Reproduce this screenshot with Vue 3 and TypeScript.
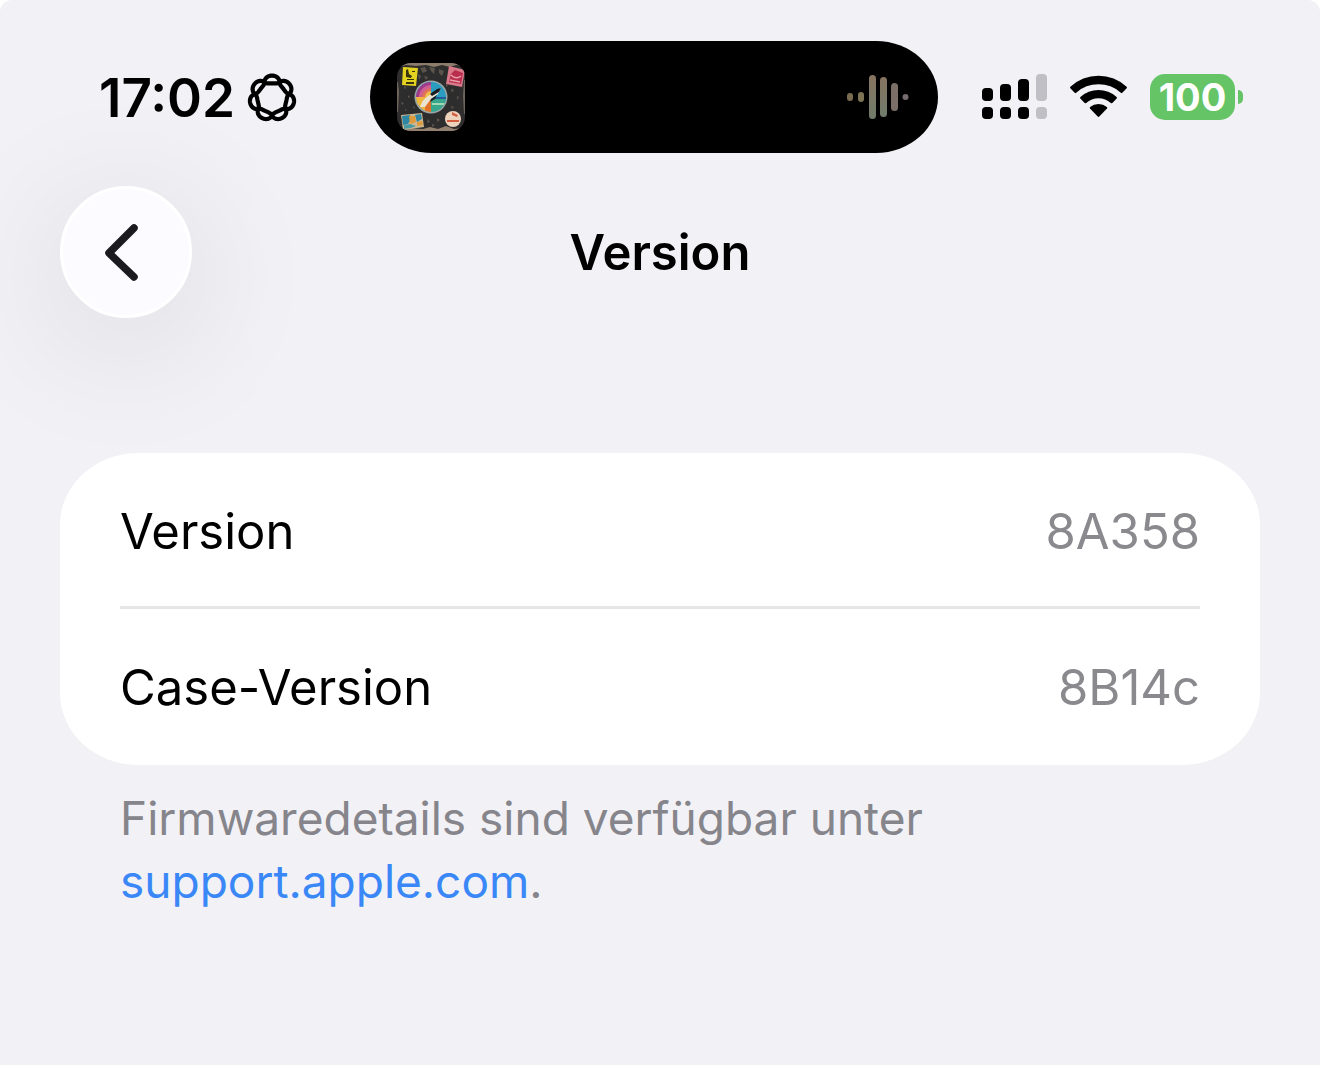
<script setup lang="ts">
interface Entry {
  label: string
  value: string
}

const entries: Entry[] = [
  { label: 'Version', value: '8A358' },
  { label: 'Case-Version', value: '8B14c' },
]

// Seven-lobed knot: one closed line that runs round the centre twice.
function knotPath(): string {
  const points: string[] = []
  const steps = 420
  for (let i = 0; i < steps; i++) {
    const t = (i / steps) * Math.PI * 4
    const a = t + 0.07 * Math.sin(7 * t)
    const r = 18 + 3.9 * Math.cos(3.5 * t) + 0.5 * Math.cos(7 * t)
    points.push(`${(25 + r * Math.sin(a)).toFixed(2)} ${(25 - r * Math.cos(a)).toFixed(2)}`)
  }
  return `M${points.join('L')}Z`
}

const knot = knotPath()
</script>

<template>
  <div class="screen">
    <header class="status">
      <div class="status-left">
        <time class="clock">17:02</time>
        <svg class="knot" width="50" height="50" viewBox="0 0 50 50" aria-hidden="true">
          <path :d="knot" fill="none" stroke="#000" stroke-width="4.2" stroke-linejoin="round" />
        </svg>
      </div>

      <div class="island">
        <svg class="cover" width="70" height="70" viewBox="0 0 70 70" aria-hidden="true">
          <defs>
            <clipPath id="cover-clip"><rect x="1" y="1" width="68" height="68" rx="14" /></clipPath>
            <clipPath id="disc-clip"><circle cx="35" cy="35" r="15" /></clipPath>
          </defs>
          <g clip-path="url(#cover-clip)">
            <rect width="70" height="70" fill="#2f2d2d" />
            <path d="M0 0H70V4L60 3 54 5 46 3 38 5 30 3 20 4 10 3 0 6Z" fill="#8b7c6c" />
            <path d="M0 70H70V66L58 67 50 64 42 67 34 65 27 67 12 66 0 67Z" fill="#94816f" />
            <path d="M0 20H2L3 30 2 50H0ZM70 18H68L67 34 68 52H70Z" fill="#6f655b" />
            <g fill="#7b6f63" opacity=".6">
              <path d="M24 6l5-1 2 4-4 2zM33 5l6 1-1 6-3-3zM43 7l5 2-2 5-3-3zM28 14l4 1-2 3zM22 12l3 2-2 4z" />
              <path d="M8 24l2 1-1 3zM12 33l2 2-2 1zM5 40l3 1-2 2zM17 44l2 1-1 2zM56 26l2 3-3 1zM61 34l2 1-2 3zM55 44l3 1-2 2zM41 56l3 2-3 2zM32 57l2 3-3 1zM36 62l3 1-3 2zM50 22l2 1-2 2zM9 47l2 1-2 1z" />
            </g>
            <path d="M7 5L22 6 20 24 6 23Z" fill="#e3d320" />
            <path d="M10 8l2-1 1 5 3 2-1 2-5-1zM16 9h3v1h-3zM11 17h7v1h-7zM10 20h8v2h-8z" fill="#37340d" />
            <path d="M53 4L69 8 66 25 50 22Z" fill="#d9798a" />
            <path d="M55 12l4-4 8 3-2 11-12-2z" fill="#b92e4c" />
            <path d="M55 13q5 5 10 1M54 18l10 2" stroke="#e9a0aa" stroke-width="1.5" fill="none" />
            <path d="M5 53L26 51 28 65 7 68Z" fill="#cbb893" />
            <path d="M6 54l8-1 1 4-3 5-5 1zM19 53l6-1 1 5-5 3z" fill="#2c86a4" />
            <path d="M13 54l6 0 1 6-6 2zM21 60l5-1 1 4-6 1z" fill="#df9a3c" />
            <path d="M8 63l6-1 6 2-5 2-7 1z" fill="#4a9aa5" />
            <circle cx="57" cy="57" r="8" fill="#ecd3bd" />
            <path d="M51 58h12v2H51zM56 50l6 3-1 2-5-2z" fill="#d25d3f" />
            <circle cx="35" cy="35" r="16.5" fill="#9ba7a7" />
            <g clip-path="url(#disc-clip)">
              <rect x="19" y="19" width="32" height="32" fill="#2a9cc0" />
              <path d="M35 35V19H19V35Z" fill="#9f3a8b" />
              <path d="M35 35V23A12 12 0 0 0 23 35Z" fill="#cf5f92" />
              <path d="M35 35V26A9 9 0 0 0 26 35Z" fill="#e0705c" />
              <path d="M35 35V29A6 6 0 0 0 29 35Z" fill="#eebe48" />
              <path d="M19 35H35V51H19Z" fill="#efb63f" />
              <path d="M29 42l6-7v16h-6z" fill="#e1702b" />
              <path d="M35 37H51V51H35Z" fill="#38a88c" />
              <path d="M36 41h15v2H36z" fill="#a1d7b3" />
              <path d="M38 35h13v2H38z" fill="#245a9b" />
            </g>
            <path d="M24 45q2-7 8-11l8-5 5-3-3 6-7 5-6 8z" fill="#ebe3d0" />
            <path d="M34 32l7-5 4-1-2 4-7 4zM35 37l6-4-2 4-5 3z" fill="#1c1d22" />
          </g>
        </svg>
        <svg class="wave" width="62" height="46" viewBox="0 0 62 46" aria-hidden="true">
          <defs>
            <linearGradient id="wave-fill" x1="0" y1="0" x2="0" y2="1">
              <stop offset="0" stop-color="#87745f" />
              <stop offset="1" stop-color="#707c6b" />
            </linearGradient>
          </defs>
          <rect x="0" y="19" width="6" height="8" rx="3" fill="#796b50" />
          <rect x="11" y="18" width="6" height="10" rx="3" fill="#7e7355" />
          <rect x="22" y="1" width="7" height="44" rx="3.5" fill="url(#wave-fill)" />
          <rect x="33" y="3" width="7" height="40" rx="3.5" fill="url(#wave-fill)" />
          <rect x="44" y="9" width="7" height="28" rx="3.5" fill="#7b6f68" />
          <circle cx="58.500" cy="23" r="3" fill="#756b70" />
        </svg>
      </div>

      <div class="status-right">
        <svg width="66" height="46" viewBox="0 0 66 46" aria-hidden="true">
          <rect x="0" y="14" width="11" height="13" rx="4" />
          <rect x="18" y="10" width="11" height="17" rx="4" />
          <rect x="36" y="5" width="11" height="22" rx="4" />
          <rect x="54" y="0" width="11" height="27" rx="4" fill="#c0bfc5" />
          <rect x="0" y="33" width="11" height="12" rx="4" />
          <rect x="18" y="33" width="11" height="12" rx="4" />
          <rect x="36" y="33" width="11" height="12" rx="4" />
          <rect x="54" y="33" width="11" height="12" rx="4" fill="#c0bfc5" />
        </svg>
        <svg class="wifi" width="58" height="46" viewBox="0 0 58 46" aria-hidden="true">
          <path d="M.3 14.200Q-.3 13.500.4 12.800A41 41 0 0 1 56.600 12.800Q57.300 13.500 56.700 14.200L52.300 18.800Q51.600 19.500 50.800 18.800A33 33 0 0 0 6.200 18.800Q5.400 19.500 4.700 18.800Z" />
          <path d="M10.300 24.400Q9.700 23.700 10.400 23A27 27 0 0 1 46.600 23Q47.300 23.700 46.700 24.400L42.300 29Q41.600 29.700 40.800 29A18.500 18.500 0 0 0 16.200 29Q15.400 29.700 14.700 29Z" />
          <path d="M20 34.500Q19.400 33.800 20.100 33.100A13 13 0 0 1 36.900 33.100Q37.600 33.800 37 34.500L29.300 42.600Q28.500 43.300 27.700 42.600Z" />
        </svg>
        <div class="battery">
          <span class="battery-level">100</span>
          <span class="battery-cap"></span>
        </div>
      </div>
    </header>

    <nav class="bar">
      <button class="back" type="button" aria-label="Zurück">
        <svg width="34" height="58" viewBox="0 0 34 58" aria-hidden="true">
          <path d="M30 5L5 30 30 54" fill="none" stroke="#1b1a1f" stroke-width="7.500" stroke-linecap="round" stroke-linejoin="round" />
        </svg>
      </button>
      <h1 class="title">Version</h1>
    </nav>

    <main class="content">
      <dl class="card">
        <div v-for="entry in entries" :key="entry.label" class="row">
          <dt>{{ entry.label }}</dt>
          <dd>{{ entry.value }}</dd>
        </div>
      </dl>
      <p class="note">
        Firmwaredetails sind verfügbar unter<br />
        <a href="https://support.apple.com">support.apple.com</a>.
      </p>
    </main>
  </div>
</template>

<style>
body {
  background: #fff;
}
</style>

<style scoped>
.screen {
  box-sizing: border-box;
  min-height: 100vh;
  overflow: hidden;
  border-radius: 12px 12px 0 0;
  background: #f2f1f6;
  color: #000;
  font-family: Inter, "Liberation Sans", sans-serif;
}

.status {
  display: grid;
  grid-template-columns: 370fr 568fr 382fr;
  align-items: center;
  padding-top: 41px;
}

.status-left {
  display: flex;
  align-items: center;
  gap: 12px;
  padding: 2px 0 0 99px;
}

.clock {
  font-size: 53px;
  line-height: 64px;
  font-weight: 600;
}

.island {
  box-sizing: border-box;
  display: flex;
  align-items: center;
  justify-content: space-between;
  height: 112px;
  padding: 0 29px 0 26px;
  border-radius: 62px / 56px;
  background: #000;
}

.status-right {
  display: flex;
  align-items: center;
  padding-left: 44px;
}

.wifi {
  margin-left: 22px;
}

.battery {
  display: flex;
  align-items: center;
  gap: 3px;
  margin-left: 22px;
}

.battery-level {
  width: 85px;
  border-radius: 15px;
  background: #65c466;
  color: #fff;
  font-size: 38px;
  line-height: 46px;
  font-weight: 700;
  text-align: center;
}

.battery-cap {
  width: 5px;
  height: 14px;
  border-radius: 0 5px 5px 0;
  background: #65c466;
}

.bar {
  display: grid;
  grid-template-columns: 132px 1fr 132px;
  align-items: center;
  padding: 33px 60px 0;
}

.back {
  display: flex;
  align-items: center;
  justify-content: center;
  width: 132px;
  height: 132px;
  padding: 0 10px 0 0;
  border: 3px solid #fff;
  border-radius: 50%;
  background: #fcfbff;
  box-shadow: 0 24px 140px rgba(0, 0, 0, 0.12);
}

.title {
  margin: 0;
  padding-top: 2px;
  font-size: 49px;
  line-height: 64px;
  font-weight: 600;
  text-align: center;
}

.content {
  padding: 135px 60px 0;
}

.card {
  margin: 0;
  padding: 0 60px;
  border-radius: 78px / 72px;
  background: #fff;
}

.row {
  box-sizing: border-box;
  display: flex;
  align-items: center;
  justify-content: space-between;
  height: 156px;
  padding-top: 2px;
  font-size: 49px;
  line-height: 64px;
}

.row:not(:last-child) {
  box-shadow: inset 0 -3px #e6e6e6;
}

.row dd {
  margin: 0;
  color: #8a8a8e;
}

.note {
  margin: 0;
  padding: 22px 60px 0;
  color: #85858b;
  font-size: 46px;
  line-height: 63px;
}

.note a {
  color: #3a87f7;
  text-decoration: none;
}
</style>
